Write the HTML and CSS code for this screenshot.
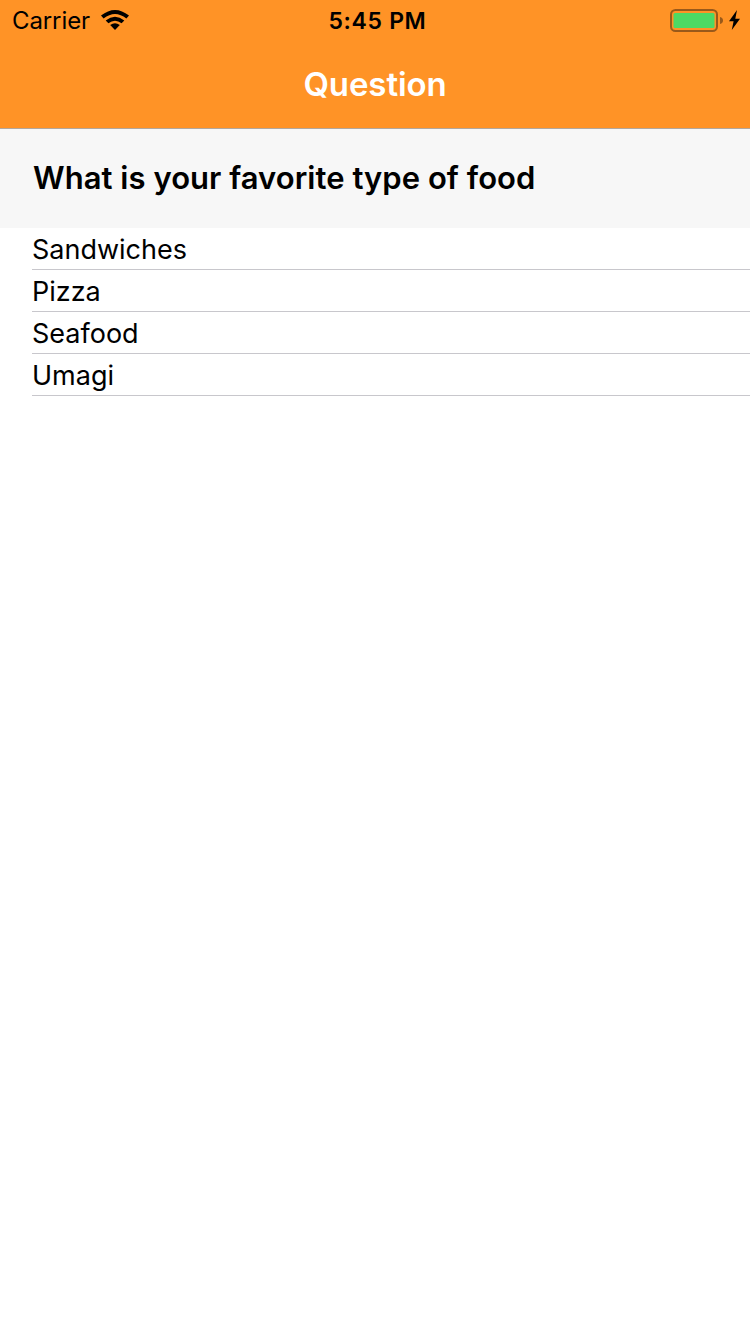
FILE: index.html
```html
<!DOCTYPE html>
<html lang="en">
<head>
<meta charset="utf-8">
<title>Question</title>
<link rel="stylesheet" href="styles.css">
</head>
<body>
<header class="top">
  <div class="status">
    <div class="status-left">
      <span class="carrier">Carrier</span>
      <svg class="wifi" width="28" height="20" viewBox="0 0 28 20"><path d="M0 5.6 Q14 -5.6 28 5.6 L25.4 8.5 Q14 -.6 2.6 8.5Z"/><path d="M4.7 10.4 Q14 3 23.3 10.4 L20.6 13.3 Q14 8.2 7.4 13.3Z"/><path d="M9.2 15.1 Q14 11.5 18.8 15.1 L14 20Z"/></svg>
    </div>
    <span class="time">5:45 PM</span>
    <div class="status-right">
      <svg width="72" height="24" viewBox="0 0 72 24"><rect x="1" y="2" width="46" height="21" rx="4.5" fill="none" stroke="#99591a" stroke-width="2"/><rect x="3.5" y="5" width="41" height="15" rx="1.5" fill="#4cd964"/><path d="M50 9Q53 9.8 53 12.5T50 16Z" fill="#99591a"/><path d="M67 2 59 13.2h4.6L61.8 22 70 10.8h-4.7Z"/></svg>
    </div>
  </div>
  <h1 class="title">Question</h1>
</header>
<main>
  <h2 class="question"><span>What is your favorite type of food</span></h2>
  <ul class="answers">
    <li class="answer"><span>Sandwiches</span></li>
    <li class="answer"><span>Pizza</span></li>
    <li class="answer"><span>Seafood</span></li>
    <li class="answer"><span>Umagi</span></li>
  </ul>
</main>
</body>
</html>
```

FILE: styles.css
```css
* { box-sizing: border-box; }
body { margin: 0; min-height: 1334px; background: #fff; color: #000; font-family: Inter, "Liberation Sans", sans-serif; }
.top { height: 129px; background: #ff9326; border-bottom: 1px solid #b2a79d; }
.status { height: 40px; display: grid; grid-template-columns: 1fr auto 1fr; align-items: center; font-size: 24px; }
.status-left { display: flex; align-items: center; padding-left: 12px; }
.carrier { width: 89px; letter-spacing: -.1px; }
.time { padding: 2px 0 0 5px; font-weight: 600; font-size: 23px; letter-spacing: .65px; }
.status-right { display: flex; justify-content: flex-end; padding-right: 8px; }
.title { margin: 0; height: 88px; line-height: 88px; text-align: center; color: #fff; font-size: 33px; font-weight: 600; letter-spacing: -.1px; }
.question { margin: 0; height: 99px; padding-left: 33px; line-height: 98px; background: #f7f7f7; font-size: 31px; font-weight: 600; letter-spacing: .04px; }
.answers { margin: 0; padding: 0 0 0 32px; list-style: none; }
.answer { height: 42px; padding-top: 1px; line-height: 42px; border-bottom: 1px solid #c8c7cc; font-size: 27px; }
```
